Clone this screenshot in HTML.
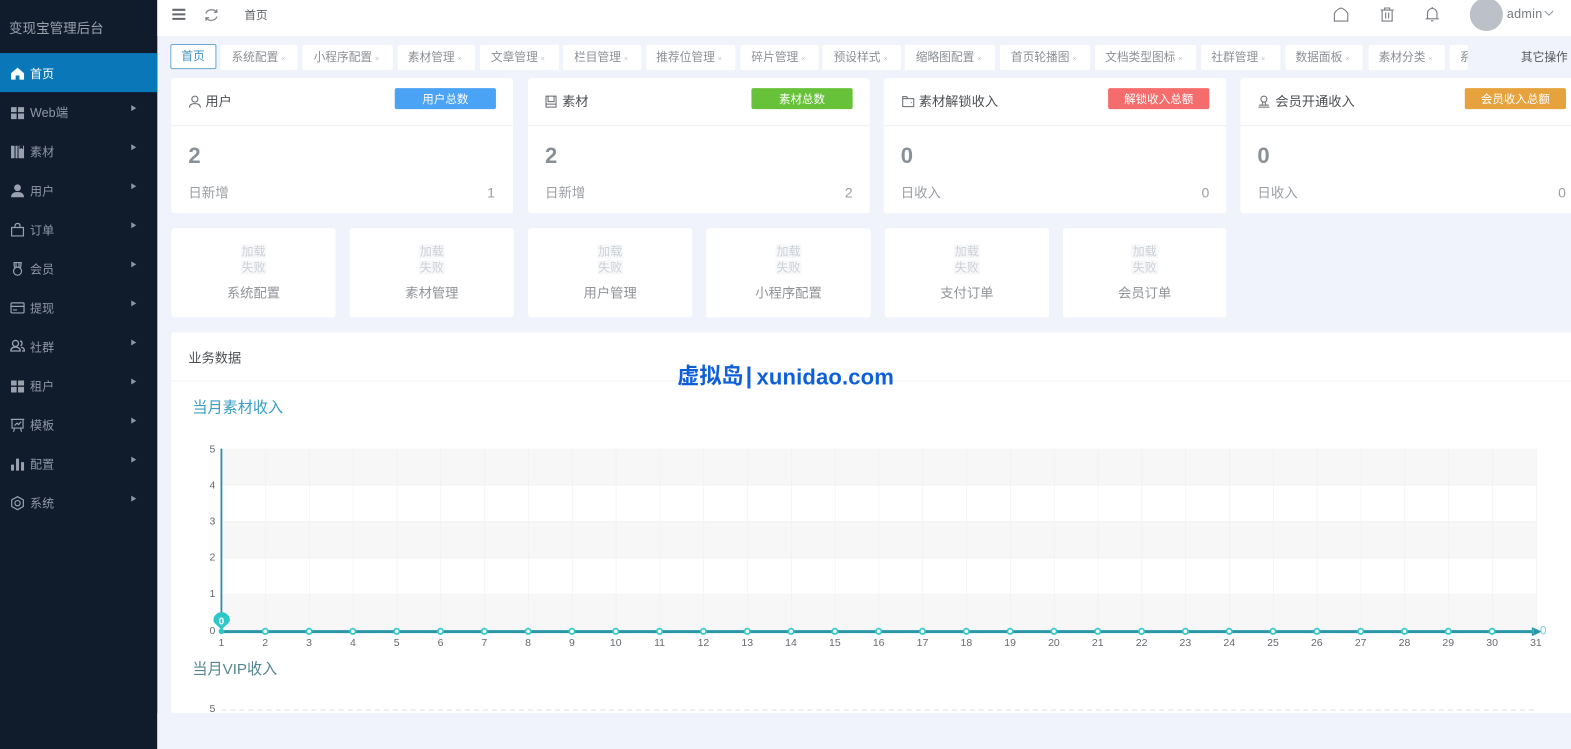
<!DOCTYPE html>
<html lang="zh-CN">
<head>
<meta charset="utf-8">
<title>变现宝管理后台</title>
<style>
html,body{margin:0;padding:0;width:1571px;height:748px;overflow:hidden;background:#f0f3fb;font-family:"Liberation Sans","Noto Sans CJK SC",sans-serif;}
#wrap{position:absolute;left:0;top:0;width:1571px;height:748px;transform-origin:0 0;transform:scale(1.00191,1.00134);}
.a{position:absolute;white-space:nowrap;}
#side{position:absolute;left:0;top:0;width:157px;height:748px;background:#101b2c;}
#side .title{position:absolute;left:9px;top:19px;font-size:13.5px;line-height:20px;color:#99a1ab;}
.act{position:absolute;left:0;top:53px;width:157px;height:39px;background:#0a77b8;}
.mi{position:absolute;left:30px;font-size:12px;line-height:18px;color:#8f98a4;margin-top:1px;}
.mi.on{color:#fff;}
.arr{position:absolute;left:131px;margin-top:.5px;width:0;height:0;border-left:5px solid #8e97a3;border-top:3.5px solid transparent;border-bottom:3.5px solid transparent;}
.ic{position:absolute;left:10px;width:15px;height:15px;}
#top{position:absolute;left:157px;top:0;width:1414px;height:36px;background:#fff;}
.tab{position:absolute;top:45px;height:25px;line-height:26px;background:#fff;font-size:11.7px;color:#8b8f94;box-sizing:border-box;padding-left:11px;border-radius:2px;overflow:hidden;white-space:nowrap;}
.tab i{font-style:normal;font-size:7px;color:#bfc2c6;margin-left:3px;}
.card{position:absolute;top:78px;height:135px;background:#fff;border-radius:3px;overflow:hidden;}
.card .hl{position:absolute;left:0;right:0;top:47px;height:1px;background:#eef0f3;}
.card .t{position:absolute;top:14px;font-size:13.2px;line-height:20px;color:#4c4f53;white-space:nowrap;}
.card .b{position:absolute;top:10px;width:101px;height:21px;line-height:24px;border-radius:2px;color:#fff;font-size:11.5px;text-align:center;}
.card .n{position:absolute;left:17px;top:64px;font-size:22px;font-weight:bold;line-height:28px;color:#8a9098;}
.card .s{position:absolute;left:17px;top:105px;font-size:13.4px;line-height:20px;color:#9a9ea3;}
.card .v{position:absolute;top:104px;font-size:14px;line-height:20px;color:#9a9ea3;}
.sc{position:absolute;top:228px;height:89px;background:#fff;border-radius:3px;text-align:center;}
.sc .f{position:absolute;left:0;right:0;top:16px;font-size:12px;line-height:15.5px;color:#cdd0d6;}
.sc .f span{background:#f7f8fa;padding:0 1px;}
.sc .l{position:absolute;left:0;right:0;top:55px;font-size:13.3px;line-height:20px;color:#8f9296;}
#panel{position:absolute;left:171px;top:332px;width:1400px;height:380px;background:#fff;}
#panel .hl{position:absolute;left:0;right:0;top:48px;height:1px;background:#eef0f3;}
.wm{position:absolute;font-weight:bold;color:#0f5fd8;white-space:nowrap;line-height:28px;}
</style>
</head>
<body>
<div id="wrap">

<div id="side">
  <div class="title">变现宝管理后台</div>
  <div class="act"></div>

  <svg class="ic" style="top:66px" viewBox="0 0 15 15"><path d="M7.5 1.5L1 7.2V13.5H5.6V9.4H9.4V13.5H14V7.2Z" fill="#fff"/></svg>
  <div class="mi on" style="top:64px">首页</div>

  <svg class="ic" style="top:105px" viewBox="0 0 15 15"><path d="M1 2h5.6v5H1zM8 2h6v5H8zM1 8.4h5.6V14H1zM8 8.4h6V14H8z" fill="#98a1ac"/></svg>
  <div class="mi" style="top:103px;font-size:12.5px">Web端</div><div class="arr" style="top:104px"></div>

  <svg class="ic" style="top:144px" viewBox="0 0 15 15"><path d="M1 1.5h3.5V14H1zM5.5 1.5h2V14h-2zM8.500 1.500h5.500V14H8.500z" fill="#98a1ac"/><path d="M9.500 1.500h3.500V5l-1.700-1.200L9.500 5z" fill="#101b2c"/></svg>
  <div class="mi" style="top:142px">素材</div><div class="arr" style="top:143px"></div>

  <svg class="ic" style="top:183px" viewBox="0 0 15 15"><circle cx="7.500" cy="4.500" r="3.400" fill="#98a1ac"/><path d="M1 14c0-3.800 2.700-5.300 6.500-5.300S14 10.200 14 14z" fill="#98a1ac"/></svg>
  <div class="mi" style="top:181px">用户</div><div class="arr" style="top:182px"></div>

  <svg class="ic" style="top:222px" viewBox="0 0 15 15" fill="none" stroke="#98a1ac" stroke-width="1.200"><path d="M1.600 5.200h11.800V13.600H1.600zM5 5.200V3.300C5 2 6 1.200 7.500 1.200S10 2 10 3.300V5.200"/></svg>
  <div class="mi" style="top:220px">订单</div><div class="arr" style="top:221px"></div>

  <svg class="ic" style="top:261px" viewBox="0 0 15 15" fill="none" stroke="#98a1ac" stroke-width="1.200"><circle cx="7.500" cy="9.800" r="4"/><path d="M3.800 1.200h7.400L10.500 6.300M3.800 1.200L4.500 6.300M6 1.200V5.700M9 1.200V5.700"/></svg>
  <div class="mi" style="top:259px">会员</div><div class="arr" style="top:260px"></div>

  <svg class="ic" style="top:300px" viewBox="0 0 15 15" fill="none" stroke="#98a1ac" stroke-width="1.200"><rect x="1" y="2.500" width="13" height="10" rx="1"/><path d="M1 6h13M3 9.500h4"/></svg>
  <div class="mi" style="top:298px">提现</div><div class="arr" style="top:299px"></div>

  <svg class="ic" style="top:338px" viewBox="0 0 15 15" fill="none" stroke="#98a1ac" stroke-width="1.300"><circle cx="5.500" cy="5" r="3"/><path d="M.8 12.500c0-2.700 2-3.900 4.700-3.900s4.700 1.200 4.700 3.900zM10 2.500c2.300.3 2.800 3.600.5 4.800M11 8.800c2.200.3 3.400 1.500 3.400 3.700h-2.400"/></svg>
  <div class="mi" style="top:337px">社群</div><div class="arr" style="top:338px"></div>

  <svg class="ic" style="top:378px" viewBox="0 0 15 15"><path d="M1 2h5.600v5H1zM8 2h6v5H8zM1 8.400h5.600V14H1zM8 8.400h6V14H8z" fill="#98a1ac"/></svg>
  <div class="mi" style="top:376px">租户</div><div class="arr" style="top:377px"></div>

  <svg class="ic" style="top:417px" viewBox="0 0 15 15" fill="none" stroke="#98a1ac" stroke-width="1.200"><path d="M.8 1.800h13.400M2 1.800V10.500H13V1.800M4.500 10.500L3.500 14.200M10.500 10.500L11.500 14.200M4.500 8L7 5.500 8.500 7 11 4.200"/></svg>
  <div class="mi" style="top:415px">模板</div><div class="arr" style="top:416px"></div>

  <svg class="ic" style="top:456px" viewBox="0 0 15 15"><path d="M1 8h3v6H1zM6 2h3v12H6zM11 5.500h3V14h-3z" fill="#98a1ac"/></svg>
  <div class="mi" style="top:454px">配置</div><div class="arr" style="top:455px"></div>

  <svg class="ic" style="top:495px" viewBox="0 0 15 15" fill="none" stroke="#98a1ac" stroke-width="1.200"><path d="M7.500 1L13.300 4.200V10.800L7.500 14 1.700 10.800V4.200Z" stroke-linejoin="round"/><circle cx="7.500" cy="7.500" r="2.600"/></svg>
  <div class="mi" style="top:493px">系统</div><div class="arr" style="top:494px"></div>
</div>

<div id="top"></div>
<svg class="a" style="left:171px;top:8px" width="15" height="13" viewBox="0 0 15 13"><path d="M1 1.800h13M1 6.300h13M1 10.800h13" stroke="#63676c" stroke-width="2" fill="none"/></svg>
<svg class="a" style="left:204px;top:8px" width="14" height="14" viewBox="0 0 14 14" fill="none" stroke="#7d8186" stroke-width="1.200"><path d="M1.500 5.500C2.500 1.500 9 .3 12 3.800M12.500 8.500C11.500 12.500 5 13.700 2 10.200"/><path d="M12.400 1.200V4.300H9.300M1.600 12.800V9.700H4.700"/></svg>
<div class="a" style="left:244px;top:7px;font-size:11.500px;line-height:18px;color:#5c6064">首页</div>

<svg class="a" style="left:1331px;top:7px" width="15" height="15" viewBox="0 0 15 15" fill="none" stroke="#777b80" stroke-width="1.100"><path d="M.8 14H14.200V6.500C12.700 3.800 10.200 1.800 7.500 1 4.800 1.800 2.300 3.800.8 6.500Z"/></svg>
<svg class="a" style="left:1377px;top:7px" width="15" height="15" viewBox="0 0 15 15" fill="none" stroke="#777b80" stroke-width="1.100"><path d="M1 3h13M5 3V1h5v2M2.500 3V14h10V3M6 5.500V11.500M9 5.500V11.500"/></svg>
<svg class="a" style="left:1422px;top:6px" width="15" height="16" viewBox="0 0 15 16" fill="none" stroke="#777b80" stroke-width="1.100"><path d="M1 12.800h13M2.800 12.800V7.500C2.800 4.500 4.800 2.500 7.500 2.500s4.700 2 4.700 5v5.300M7.500 1v1.500M6.300 14.800h2.400"/></svg>
<div class="a" style="left:1467px;top:-2px;width:33px;height:33px;border-radius:50%;background:#bcc0c9"></div>
<div class="a" style="left:1504px;top:5px;font-size:12.500px;line-height:18px;color:#777b80;letter-spacing:.3px">admin</div>
<svg class="a" style="left:1541px;top:10px" width="10" height="7" viewBox="0 0 10 7"><path d="M.8 1L5 5.200 9.200 1" fill="none" stroke="#8a8e93" stroke-width="1"/></svg>

<div class="tab" style="left:170px;width:46px;top:44px;height:25px;border:1px solid #6aa7d0;color:#3d8fc0;padding-left:10px;line-height:24px">首页</div>
<div class="tab" style="left:220px;width:77px">系统配置<i>×</i></div>
<div class="tab" style="left:302px;width:90px">小程序配置<i>×</i></div>
<div class="tab" style="left:397px;width:77px;padding-left:10px">素材管理<i>×</i></div>
<div class="tab" style="left:479px;width:79px">文章管理<i>×</i></div>
<div class="tab" style="left:562px;width:78px">栏目管理<i>×</i></div>
<div class="tab" style="left:645px;width:89px;padding-left:10px">推荐位管理<i>×</i></div>
<div class="tab" style="left:739px;width:78px">碎片管理<i>×</i></div>
<div class="tab" style="left:821px;width:78px">预设样式<i>×</i></div>
<div class="tab" style="left:903px;width:90px">缩略图配置<i>×</i></div>
<div class="tab" style="left:998px;width:90px">首页轮播图<i>×</i></div>
<div class="tab" style="left:1093px;width:101px;padding-left:10px">文档类型图标<i>×</i></div>
<div class="tab" style="left:1199px;width:79px;padding-left:10px">社群管理<i>×</i></div>
<div class="tab" style="left:1283px;width:77px;padding-left:10px">数据面板<i>×</i></div>
<div class="tab" style="left:1366px;width:76px;padding-left:10px">素材分类<i>×</i></div>
<div class="tab" style="left:1447px;width:18px;padding-left:10px">系统</div>
<div class="a" style="left:1518px;top:49px;font-size:11.700px;line-height:18px;color:#55595d">其它操作</div>

<div class="card" style="left:171px;width:341px">
  <svg class="a" style="left:17px;top:17px" width="13" height="13" viewBox="0 0 13 13" fill="none" stroke="#64686d" stroke-width="1"><circle cx="6.500" cy="4" r="3"/><path d="M1 12.500C1 9.500 3.500 8.500 6.500 8.500s5.500 1 5.500 4"/></svg>
  <div class="t" style="left:34px">用户</div>
  <div class="b" style="left:223px;background:#4aa3f5">用户总数</div>
  <div class="hl"></div>
  <div class="n">2</div><div class="s">日新增</div><div class="v" style="right:18px">1</div>
</div>
<div class="card" style="left:527px;width:341px">
  <svg class="a" style="left:17px;top:17px" width="12" height="13" viewBox="0 0 12 13" fill="none" stroke="#64686d" stroke-width="1"><path d="M1 1h10v11H1zM3 1V6.500h6V1M1 9h10"/></svg>
  <div class="t" style="left:34px">素材</div>
  <div class="b" style="left:223px;background:#67c23a">素材总数</div>
  <div class="hl"></div>
  <div class="n">2</div><div class="s">日新增</div><div class="v" style="right:17px">2</div>
</div>
<div class="card" style="left:882px;width:342px">
  <svg class="a" style="left:18px;top:17px" width="13" height="13" viewBox="0 0 13 13" fill="none" stroke="#64686d" stroke-width="1"><path d="M1 1.500H5L6 3.500H12V11.500H1ZM1 3.500H6M9 7.500h1"/></svg>
  <div class="t" style="left:35px">素材解锁收入</div>
  <div class="b" style="left:224px;background:#f56c6c">解锁收入总额</div>
  <div class="hl"></div>
  <div class="n">0</div><div class="s">日收入</div><div class="v" style="right:17px">0</div>
</div>
<div class="card" style="left:1238px;width:333px">
  <svg class="a" style="left:17px;top:17px" width="13" height="13" viewBox="0 0 13 13" fill="none" stroke="#64686d" stroke-width="1"><circle cx="6.500" cy="4" r="3"/><path d="M5.500 7L4.500 10M7.500 7L8.500 10M1 12h11M1.500 10h10"/></svg>
  <div class="t" style="left:35px">会员开通收入</div>
  <div class="b" style="left:224px;background:#e6a23c">会员收入总额</div>
  <div class="hl"></div>
  <div class="n">0</div><div class="s">日收入</div><div class="v" style="right:8px">0</div>
</div>

<div class="sc" style="left:171px;width:164px"><div class="f"><span>加载</span><br><span>失败</span></div><div class="l">系统配置</div></div>
<div class="sc" style="left:349px;width:164px"><div class="f"><span>加载</span><br><span>失败</span></div><div class="l">素材管理</div></div>
<div class="sc" style="left:527px;width:164px"><div class="f"><span>加载</span><br><span>失败</span></div><div class="l">用户管理</div></div>
<div class="sc" style="left:705px;width:164px"><div class="f"><span>加载</span><br><span>失败</span></div><div class="l">小程序配置</div></div>
<div class="sc" style="left:883px;width:164px"><div class="f"><span>加载</span><br><span>失败</span></div><div class="l">支付订单</div></div>
<div class="sc" style="left:1061px;width:163px"><div class="f"><span>加载</span><br><span>失败</span></div><div class="l">会员订单</div></div>

<div id="panel">
  <div class="a" style="left:17px;top:16px;font-size:13.200px;line-height:20px;color:#4c4f53">业务数据</div>
  <div class="hl"></div>
</div>

<svg class="a" style="left:0;top:0" width="1571" height="748" viewBox="0 0 1571 748">
  <defs>
    <pattern id="vl" x="221" y="0" width="43.7333" height="748" patternUnits="userSpaceOnUse">
      <path d="M0 448V630" stroke="#efeff1" stroke-width="1.200" fill="none"/>
    </pattern>
    <pattern id="dots" x="199.130" y="620" width="43.7333" height="20" patternUnits="userSpaceOnUse">
      <circle cx="21.867" cy="10.500" r="2.700" fill="#fff" stroke="#2ec7c9" stroke-width="1.700"/>
    </pattern>
  </defs>
  <rect x="222" y="448" width="1311" height="36.400" fill="#f7f7f8"/>
  <rect x="222" y="520.800" width="1311" height="36.400" fill="#f7f7f8"/>
  <rect x="222" y="593.600" width="1311" height="36.400" fill="#f7f7f8"/>
  <path d="M222 484.400H1533M222 520.800H1533M222 557.200H1533M222 593.600H1533" stroke="#f3f3f5" stroke-width="1" fill="none"/>
  <rect x="240" y="448" width="1296" height="182" fill="url(#vl)"/>
  <path d="M221 448V631" stroke="#2a8fa8" stroke-width="1.800" fill="none"/>
  <path d="M221 630.800H1535" stroke="#2a97a8" stroke-width="3" fill="none"/>
  <path d="M1529 626.300L1539 630.800 1529 635.300Z" fill="#2a97a8"/>
  <rect x="240" y="620" width="1291" height="20" fill="url(#dots)"/>
  <path d="M221 629C217 624 213 622.500 213 619.500a8.200 8.200 0 0 1 16.400 0C229.400 622.500 225 624 221 629Z" fill="#2ec7c9"/>
  <circle cx="221" cy="630.500" r="2.800" fill="#2ec7c9"/>
  <text x="221" y="623.500" font-size="10" font-weight="bold" fill="#fff" text-anchor="middle" font-family="Liberation Sans, sans-serif">0</text>
  <text x="1537" y="633.500" font-size="12" fill="#6fd2d4" font-family="Liberation Sans, sans-serif">0</text>

  <g font-size="10.500" fill="#65696e" text-anchor="end" font-family="Liberation Sans, sans-serif">
    <text x="215" y="452">5</text><text x="215" y="488">4</text><text x="215" y="524">3</text>
    <text x="215" y="560">2</text><text x="215" y="596">1</text><text x="215" y="633">0</text>
    <text x="215" y="711">5</text>
  </g>
  <g font-size="10.500" fill="#65696e" text-anchor="middle" font-family="Liberation Sans, sans-serif">
    <text x="221" y="645">1</text><text x="264.700" y="645">2</text><text x="308.500" y="645">3</text><text x="352.200" y="645">4</text><text x="395.900" y="645">5</text><text x="439.700" y="645">6</text><text x="483.400" y="645">7</text><text x="527.100" y="645">8</text><text x="570.900" y="645">9</text><text x="614.600" y="645">10</text><text x="658.300" y="645">11</text><text x="702.100" y="645">12</text><text x="745.800" y="645">13</text><text x="789.500" y="645">14</text><text x="833.300" y="645">15</text><text x="877" y="645">16</text><text x="920.700" y="645">17</text><text x="964.500" y="645">18</text><text x="1008.200" y="645">19</text><text x="1051.900" y="645">20</text><text x="1095.700" y="645">21</text><text x="1139.400" y="645">22</text><text x="1183.100" y="645">23</text><text x="1226.900" y="645">24</text><text x="1270.600" y="645">25</text><text x="1314.300" y="645">26</text><text x="1358.100" y="645">27</text><text x="1401.800" y="645">28</text><text x="1445.500" y="645">29</text><text x="1489.300" y="645">30</text><text x="1533" y="645">31</text>
  </g>
  <path d="M221 709H1532" stroke="#dedfe1" stroke-width="1" stroke-dasharray="5 4" fill="none"/>
  <rect x="157" y="712" width="1414" height="36" fill="#f0f3fb"/>
</svg>

<div class="a" style="left:192px;top:397px;font-size:15.100px;line-height:22px;color:#3b9cc4">当月素材收入</div>
<div class="a" style="left:192px;top:658px;font-size:15.100px;line-height:22px;color:#56868f">当月VIP收入</div>

<div class="wm" style="left:676px;top:362px;font-size:22px">虚拟岛</div>
<div class="a" style="left:746px;top:366px;width:3px;height:22px;background:#0f5fd8"></div>
<div class="wm" style="left:755px;top:363px;font-size:22px;letter-spacing:.15px">xunidao.com</div>

</div>
</body>
</html>
